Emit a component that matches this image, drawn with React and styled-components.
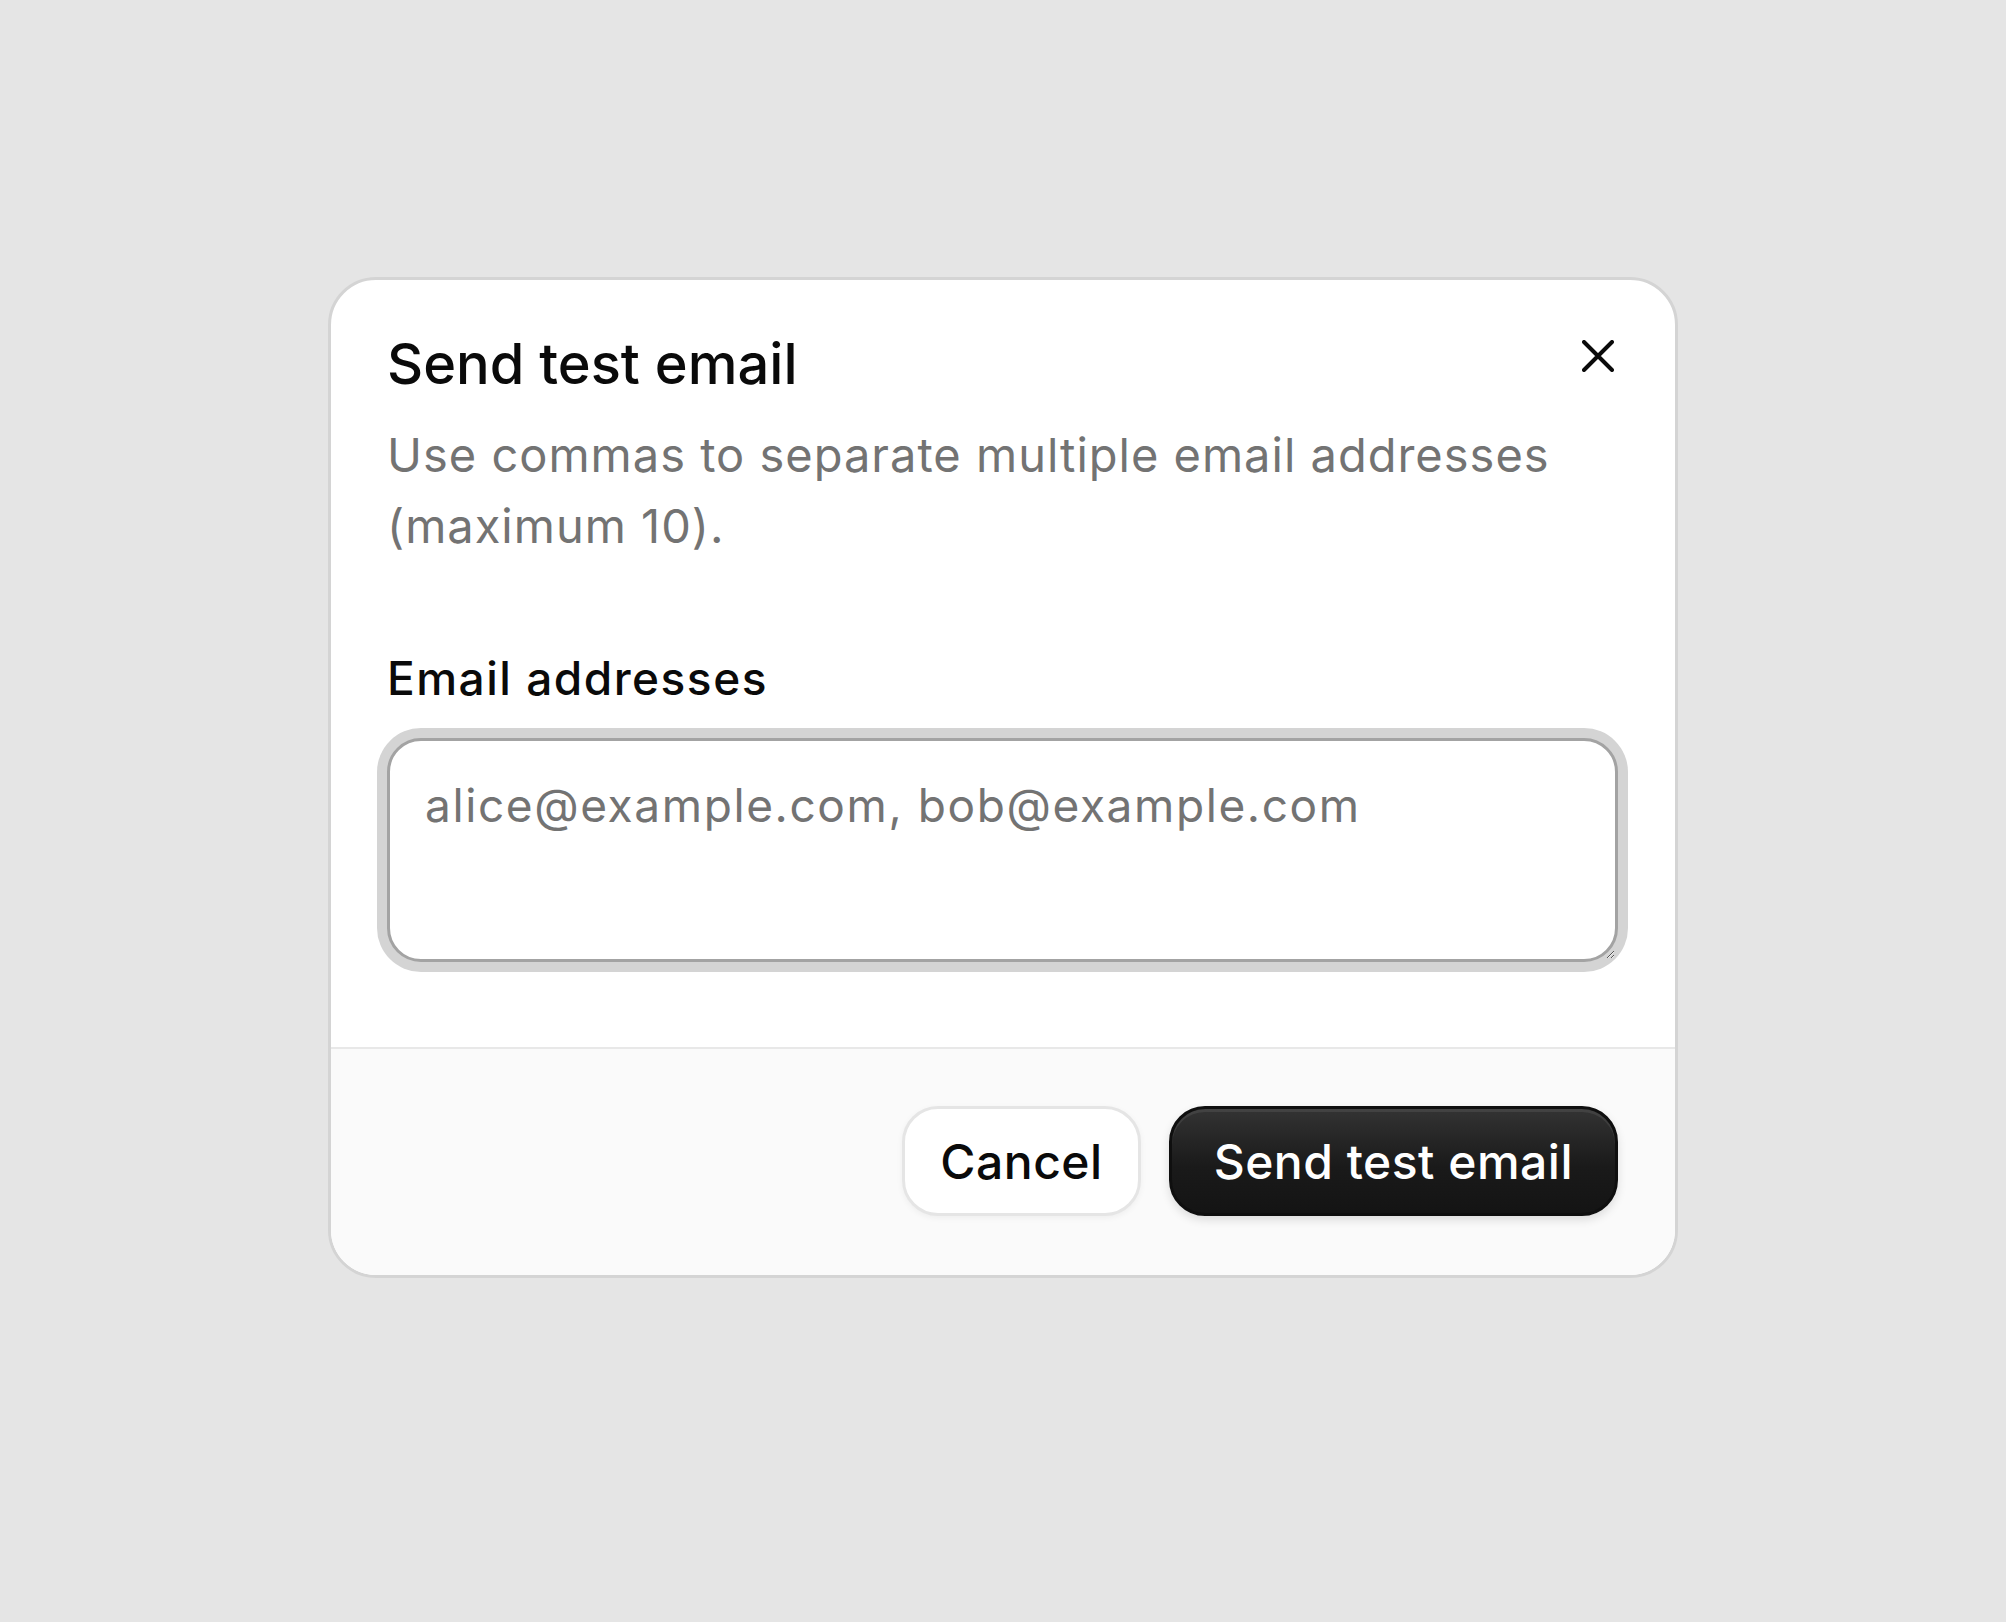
import React from "react";
import styled, { createGlobalStyle } from "styled-components";

const GlobalStyle = createGlobalStyle`
  html, body {
    margin: 0;
    padding: 0;
    background: #e5e5e5;
    font-family: Inter, "Noto Sans", sans-serif;
  }
  * {
    box-sizing: border-box;
  }
`;

const Page = styled.div`
  min-height: 100vh;
  display: flex;
  justify-content: center;
  align-items: flex-start;
  padding-top: 277px;
`;

const Dialog = styled.div`
  width: 1350px;
  background: #ffffff;
  border: 3px solid #d4d4d4;
  border-radius: 48px;
  overflow: hidden;
`;

const Body = styled.div`
  padding: 51px 57px 85px 56px;
`;

const Header = styled.div`
  display: flex;
  justify-content: space-between;
  align-items: flex-start;
`;

const Title = styled.h2`
  margin: 0;
  font-size: 56px;
  line-height: 67px;
  font-weight: 500;
  color: #0a0a0a;
`;

const CloseButton = styled.button`
  width: 40px;
  height: 40px;
  margin-top: 5px;
  padding: 0;
  border: none;
  background: transparent;
  display: flex;
  align-items: center;
  justify-content: center;
  cursor: pointer;
`;

const Description = styled.p`
  margin: 21px 0 0;
  font-size: 47px;
  line-height: 71px;
  letter-spacing: 1px;
  color: #737373;
`;

const Label = styled.label`
  display: block;
  margin-top: 89px;
  font-size: 46px;
  line-height: 56px;
  letter-spacing: 1.5px;
  font-weight: 500;
  color: #0a0a0a;
`;

const TextArea = styled.textarea`
  display: block;
  width: 100%;
  height: 224px;
  margin-top: 32px;
  padding: 30px 35px;
  border: 3px solid #a3a3a3;
  border-radius: 34px;
  box-shadow: 0 0 0 10px #d4d4d4;
  font-family: Inter, "Noto Sans", sans-serif;
  font-size: 46px;
  line-height: 69px;
  letter-spacing: 1.6px;
  color: #0a0a0a;
  outline: none;

  &::placeholder {
    color: #737373;
  }
`;

const Footer = styled.div`
  display: flex;
  justify-content: flex-end;
  align-items: center;
  gap: 28px;
  padding: 57px 57px 59px;
  background: #fafafa;
  border-top: 2px solid #e8e8e8;
`;

const Button = styled.button`
  height: 110px;
  padding: 0 ${(p) => (p.$primary ? "42px" : "35px")};
  border-radius: 36px;
  font-family: Inter, "Noto Sans", sans-serif;
  font-size: 48px;
  font-weight: 500;
  letter-spacing: 0.5px;
  cursor: pointer;
  border: 3px solid ${(p) => (p.$primary ? "#0f0f0f" : "#e5e5e5")};
  color: ${(p) => (p.$primary ? "#ffffff" : "#0a0a0a")};
  background: ${(p) =>
    p.$primary ? "linear-gradient(180deg, #333333 0%, #1a1a1a 55%, #141414 100%)" : "#ffffff"};
  box-shadow: ${(p) =>
    p.$primary
      ? "inset 0 3px 0 rgba(255,255,255,0.08), 0 4px 10px rgba(0,0,0,0.12)"
      : "0 2px 6px rgba(0,0,0,0.05)"};
`;

const CloseIcon = () => (
  <svg width="32" height="32" viewBox="0 0 32 32" fill="none">
    <path d="M2 2L30 30M30 2L2 30" stroke="#0a0a0a" strokeWidth="4" strokeLinecap="round" />
  </svg>
);

const App = () => {
  return (
    <Page>
      <GlobalStyle />
      <Dialog>
        <Body>
          <Header>
            <Title>Send test email</Title>
            <CloseButton aria-label="Close">
              <CloseIcon />
            </CloseButton>
          </Header>
          <Description>
            Use commas to separate multiple email addresses (maximum 10).
          </Description>
          <Label htmlFor="emails">Email addresses</Label>
          <TextArea id="emails" placeholder="alice@example.com, bob@example.com" />
        </Body>
        <Footer>
          <Button>Cancel</Button>
          <Button $primary>Send test email</Button>
        </Footer>
      </Dialog>
    </Page>
  );
};

export default App;
